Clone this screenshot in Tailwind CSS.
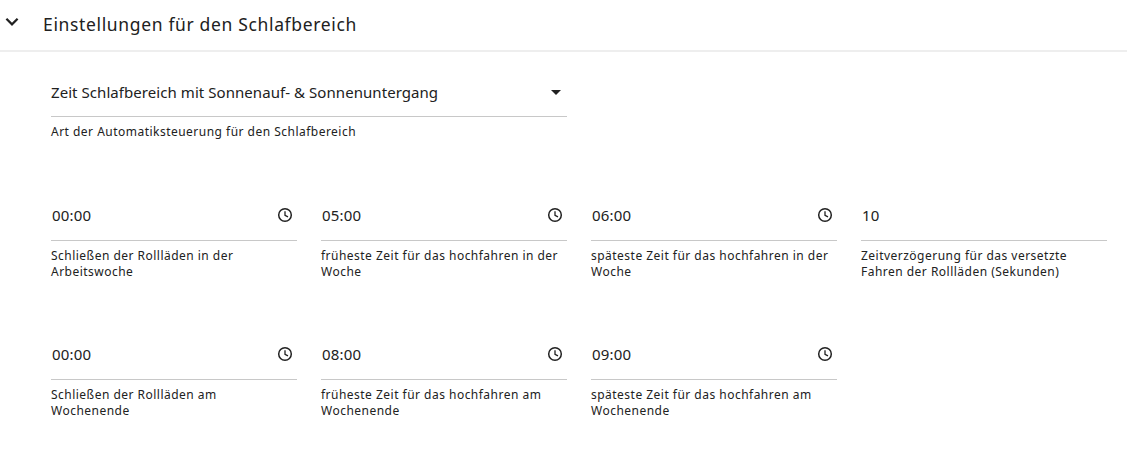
<!DOCTYPE html>
<html><head><meta charset="utf-8"><script src="https://cdn.jsdelivr.net/npm/@tailwindcss/browser@4"></script></head>
<body class="bg-white text-[#212121] font-['Noto_Sans',sans-serif] w-[1127px] h-[458px] overflow-hidden">
<div class="h-[52px] border-b-2 border-[#eeeeee] flex items-center">
  <svg class="w-6 h-6 mb-[6px]" viewBox="0 0 24 24"><path d="M7.2 8 12 12.8 16.8 8 18.4 9.6 12 16 5.6 9.6z" fill="#212121"/></svg>
  <div class="ml-[19px] mb-[1px] text-[17.5px] tracking-[0.65px]">Einstellungen für den Schlafbereich</div>
</div>
<div class="pl-[51px] pr-[20px]">
  <div class="w-[516px] h-[65px] border-b border-[#c8c8c8] flex items-center justify-between pt-[17px] pr-[6px] mb-[7px]">
    <span class="text-[15px] tracking-[0.06px]">Zeit Schlafbereich mit Sonnenauf- &amp; Sonnenuntergang</span>
    <svg class="w-[10px] h-[5px]" viewBox="0 0 10 5"><path d="M0 0h10L5 5z" fill="#212121"/></svg>
  </div>
  <div class="text-[12px] leading-[15px] tracking-[0.48px]">Art der Automatiksteuerung für den Schlafbereich</div>
  <div class="grid grid-cols-[246px_246px_246px_246px] gap-x-[24px] mt-[52px] gap-y-[51px]">
    <div class="h-[88px]"><div class="h-[50px] border-b border-[#c8c8c8] flex justify-between items-center pl-[1px] pr-[3px]"><span class="text-[15px] tracking-[0.2px]">00:00</span><svg class="w-[16px] h-[16px] mb-[1px] mr-[1px]" viewBox="0 0 16 16"><circle cx="8" cy="8" r="6.3" fill="none" stroke="#212121" stroke-width="1.5"/><path d="M8 4.2V8.3l3 1.6" fill="none" stroke="#212121" stroke-width="1.3"/></svg></div><div class="text-[12px] leading-[16px] mt-[7px] tracking-[0.48px]">Schließen der Rollläden in der Arbeitswoche</div></div>
    <div class="h-[88px]"><div class="h-[50px] border-b border-[#c8c8c8] flex justify-between items-center pl-[1px] pr-[3px]"><span class="text-[15px] tracking-[0.2px]">05:00</span><svg class="w-[16px] h-[16px] mb-[1px] mr-[1px]" viewBox="0 0 16 16"><circle cx="8" cy="8" r="6.3" fill="none" stroke="#212121" stroke-width="1.5"/><path d="M8 4.2V8.3l3 1.6" fill="none" stroke="#212121" stroke-width="1.3"/></svg></div><div class="text-[12px] leading-[16px] mt-[7px] tracking-[0.48px]">früheste Zeit für das hochfahren in der Woche</div></div>
    <div class="h-[88px]"><div class="h-[50px] border-b border-[#c8c8c8] flex justify-between items-center pl-[1px] pr-[3px]"><span class="text-[15px] tracking-[0.2px]">06:00</span><svg class="w-[16px] h-[16px] mb-[1px] mr-[1px]" viewBox="0 0 16 16"><circle cx="8" cy="8" r="6.3" fill="none" stroke="#212121" stroke-width="1.5"/><path d="M8 4.2V8.3l3 1.6" fill="none" stroke="#212121" stroke-width="1.3"/></svg></div><div class="text-[12px] leading-[16px] mt-[7px] tracking-[0.48px]">späteste Zeit für das hochfahren in der Woche</div></div>
    <div class="h-[88px]"><div class="h-[50px] border-b border-[#c8c8c8] flex justify-between items-center pl-[1px] pr-[3px]"><span class="text-[15px] tracking-[0.2px]">10</span></div><div class="text-[12px] leading-[16px] mt-[7px] tracking-[0.48px]">Zeitverzögerung für das versetzte Fahren der Rollläden (Sekunden)</div></div>
    <div class="h-[88px]"><div class="h-[50px] border-b border-[#c8c8c8] flex justify-between items-center pl-[1px] pr-[3px]"><span class="text-[15px] tracking-[0.2px]">00:00</span><svg class="w-[16px] h-[16px] mb-[1px] mr-[1px]" viewBox="0 0 16 16"><circle cx="8" cy="8" r="6.3" fill="none" stroke="#212121" stroke-width="1.5"/><path d="M8 4.2V8.3l3 1.6" fill="none" stroke="#212121" stroke-width="1.3"/></svg></div><div class="text-[12px] leading-[16px] mt-[7px] tracking-[0.48px]">Schließen der Rollläden am Wochenende</div></div>
    <div class="h-[88px]"><div class="h-[50px] border-b border-[#c8c8c8] flex justify-between items-center pl-[1px] pr-[3px]"><span class="text-[15px] tracking-[0.2px]">08:00</span><svg class="w-[16px] h-[16px] mb-[1px] mr-[1px]" viewBox="0 0 16 16"><circle cx="8" cy="8" r="6.3" fill="none" stroke="#212121" stroke-width="1.5"/><path d="M8 4.2V8.3l3 1.6" fill="none" stroke="#212121" stroke-width="1.3"/></svg></div><div class="text-[12px] leading-[16px] mt-[7px] tracking-[0.48px]">früheste Zeit für das hochfahren am Wochenende</div></div>
    <div class="h-[88px]"><div class="h-[50px] border-b border-[#c8c8c8] flex justify-between items-center pl-[1px] pr-[3px]"><span class="text-[15px] tracking-[0.2px]">09:00</span><svg class="w-[16px] h-[16px] mb-[1px] mr-[1px]" viewBox="0 0 16 16"><circle cx="8" cy="8" r="6.3" fill="none" stroke="#212121" stroke-width="1.5"/><path d="M8 4.2V8.3l3 1.6" fill="none" stroke="#212121" stroke-width="1.3"/></svg></div><div class="text-[12px] leading-[16px] mt-[7px] tracking-[0.48px]">späteste Zeit für das hochfahren am Wochenende</div></div>
  </div>
</div>
</body></html>
